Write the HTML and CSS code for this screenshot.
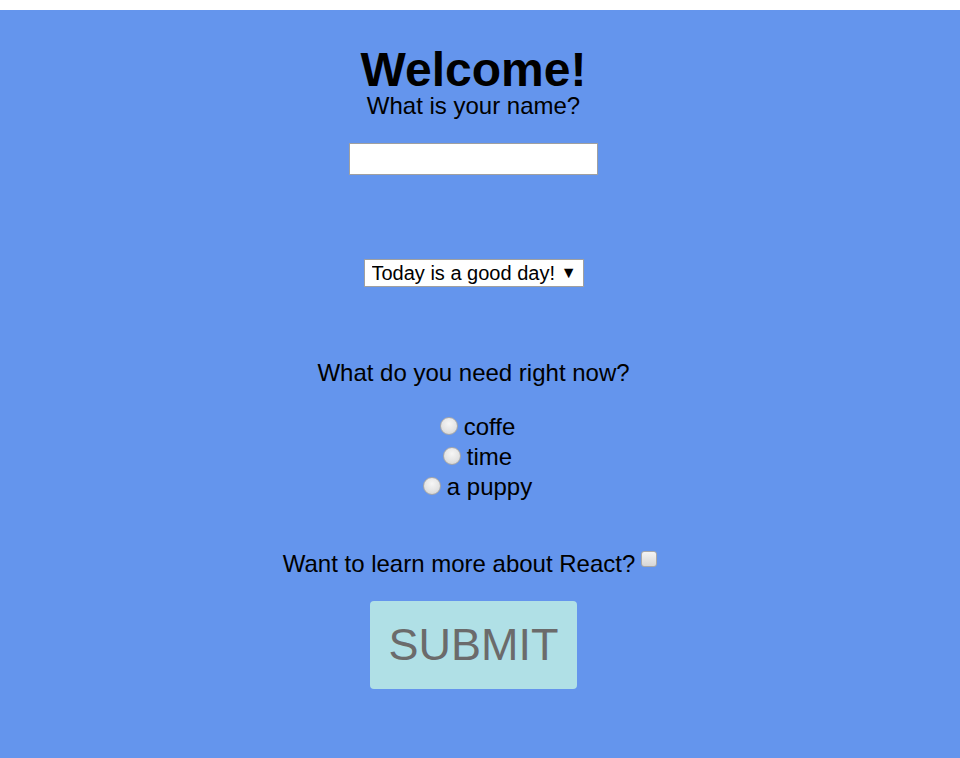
FILE: index.html
```html
<!DOCTYPE html>
<html>
<head>
<meta charset="utf-8">
<link rel="stylesheet" href="styles.css">
</head>
<body>
<div class="app">
  <form class="form">
    <h1 class="title">Welcome!</h1>
    <label class="label name-label" for="name">What is your name?</label>
    <input class="text-input" id="name" type="text">
    <span class="select-wrap">
      <select class="select">
        <option>Today is a good day!</option>
      </select>
    </span>
    <p class="label question">What do you need right now?</p>
    <div class="radios">
      <label class="radio-row"><input class="radio" type="radio" name="need"> coffe</label>
      <label class="radio-row"><input class="radio" type="radio" name="need"> time</label>
      <label class="radio-row"><input class="radio" type="radio" name="need"> a puppy</label>
    </div>
    <label class="label react-row">Want to learn more about React? <input class="check" type="checkbox"></label>
    <button class="submit" type="button">SUBMIT</button>
  </form>
</div>
</body>
</html>
```
FILE: styles.css
```css
html, body {
  margin: 0;
  padding: 0;
  background: #ffffff;
}
body {
  font-family: "Liberation Sans", Arial, sans-serif;
  color: #000;
}
.app {
  margin-top: 10px;
  background: #6495ed;
  height: 748px;
  box-sizing: border-box;
  padding-top: 38px;
}
.form {
  display: flex;
  flex-direction: column;
  align-items: center;
  padding-right: 13px;
}
.title {
  margin: 0;
  font-size: 48px;
  line-height: 44px;
  font-weight: bold;
}
.label {
  font-size: 24px;
  line-height: 28px;
  margin: 0;
}
.name-label {
  margin-top: 2px;
  line-height: 24px;
}
.text-input {
  margin-top: 25px;
  width: 249px;
  height: 32px;
  box-sizing: border-box;
  border: 1px solid #a0a0a0;
  background: #fff;
  padding: 0 4px;
  font-size: 20px;
  font-family: inherit;
}
.select-wrap {
  position: relative;
  margin-top: 84px;
  display: inline-block;
}
.select {
  appearance: none;
  -webkit-appearance: none;
  width: 220px;
  height: 28px;
  box-sizing: border-box;
  border: 1px solid #a0a0a0;
  border-radius: 0;
  background: #fff;
  font-family: inherit;
  font-size: 20px;
  color: #000;
  padding: 0 0 0 7px;
}
.select-wrap::after {
  content: "\25BC";
  position: absolute;
  right: 7px;
  top: 5px;
  font-size: 16px;
  line-height: 18px;
  pointer-events: none;
}
.question {
  margin-top: 72px;
}
.radios {
  margin-top: 25px;
  display: flex;
  flex-direction: column;
  align-items: center;
}
.radio-row {
  font-size: 24px;
  line-height: 30px;
  display: flex;
  align-items: flex-start;
}
.radio {
  appearance: none;
  -webkit-appearance: none;
  width: 18px;
  height: 18px;
  margin: 5px 6px 0 8px;
  border-radius: 50%;
  border: 1px solid #a8a8a8;
  background: radial-gradient(circle at 50% 35%, #f6f6f6 0%, #e4e4e4 55%, #cfcfcf 100%);
  box-sizing: border-box;
}
.react-row {
  margin-top: 48px;
  display: flex;
  align-items: flex-start;
}
.check {
  appearance: none;
  -webkit-appearance: none;
  width: 16px;
  height: 16px;
  margin: 1px 7px 0 6px;
  border: 1px solid #a8a8a8;
  border-radius: 3px;
  background: linear-gradient(#f4f4f4, #d6d6d6);
  box-sizing: border-box;
}
.submit {
  margin-top: 23px;
  background: #b0e0e6;
  color: #6b6b6b;
  border: none;
  border-radius: 4px;
  font-family: inherit;
  font-size: 45px;
  line-height: 56px;
  padding: 16px 13px;
  width: 207px;
  height: 88px;
}
```
